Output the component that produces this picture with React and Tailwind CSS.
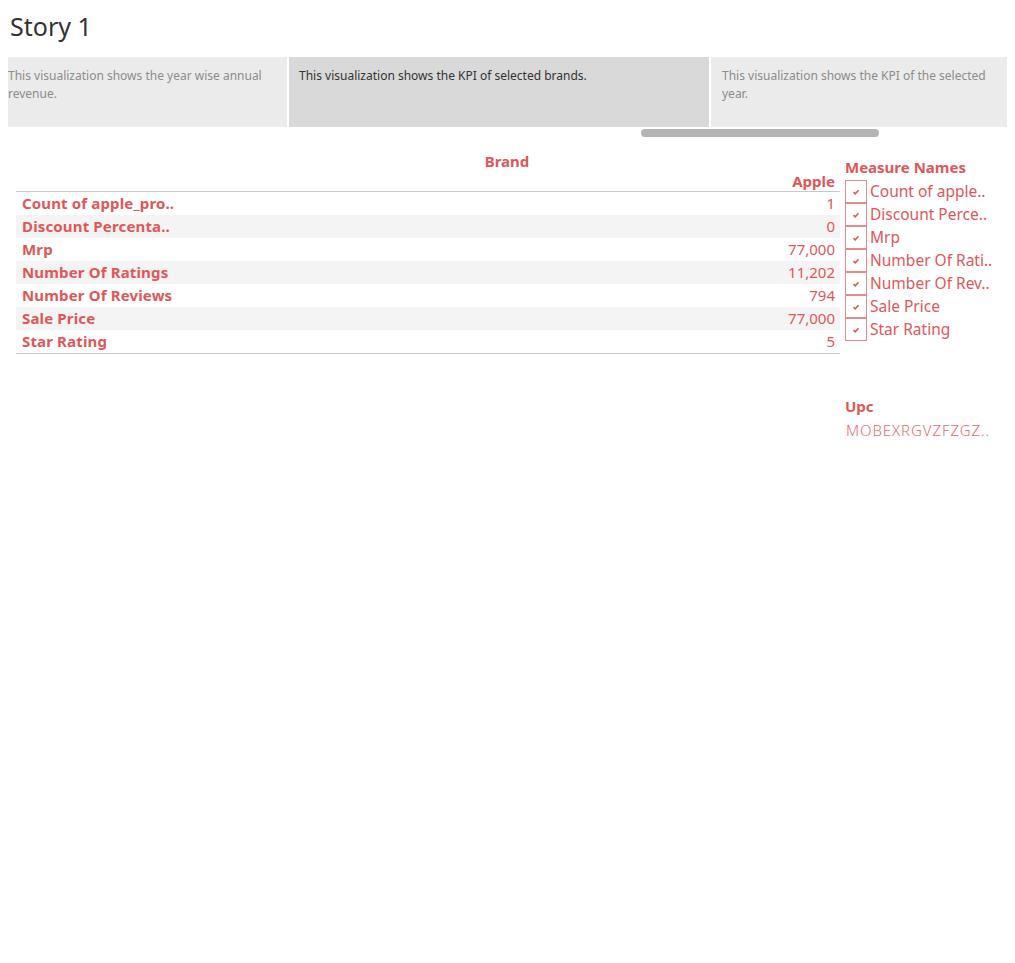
import React from 'react';

const rows = [
  ['Count of apple_pro..', '1'],
  ['Discount Percenta..', '0'],
  ['Mrp', '77,000'],
  ['Number Of Ratings', '11,202'],
  ['Number Of Reviews', '794'],
  ['Sale Price', '77,000'],
  ['Star Rating', '5'],
];

const legend = [
  'Count of apple..',
  'Discount Perce..',
  'Mrp',
  'Number Of Rati..',
  'Number Of Rev..',
  'Sale Price',
  'Star Rating',
];

const points = [
  { text: 'This visualization shows the year wise annual revenue.', w: 'w-[279px]', active: false, pad: 'pl-0' },
  { text: 'This visualization shows the KPI of selected brands.', w: 'w-[420px]', active: true, pad: 'pl-[10px]' },
  { text: 'This visualization shows the KPI of the selected year.', w: 'w-[296px]', active: false, pad: 'pl-[11px]' },
];

function Check() {
  return (
    <svg width="8" height="8" viewBox="0 0 8 8">
      <path d="M1.5 4.2 L3.2 5.8 L6.5 2.2" fill="none" stroke="#e15759" strokeWidth="1.6" />
    </svg>
  );
}

export default function App() {
  return (
    <div className="w-[1015px] h-[963px] bg-white text-[#333]" style={{ fontFamily: '"Noto Sans", "Open Sans", sans-serif' }}>
      <div className="pt-[10px] pl-[10px] h-[57px] text-[25px] leading-[32px] text-[#333]">Story 1</div>

      <div className="flex gap-[2px] pl-[8px] h-[70px]">
        {points.map((p, i) => (
          <div
            key={i}
            className={`${p.w} ${p.pad} pr-[14px] pt-[10px] text-[12px] leading-[18px] ${p.active ? 'bg-[#d9d9d9] text-[#333]' : 'bg-[#ebebeb] text-[#8c8c8c]'}`}
          >
            {p.text}
          </div>
        ))}
      </div>
      <div className="h-[12px] flex items-center">
        <div className="ml-[641px] w-[238px] h-[8px] rounded-full bg-[#b4b4b4]" />
      </div>

      <div className="flex pt-[12px] text-[#e15759]">
        <div className="ml-[16px] w-[824px]">
          <div className="text-center font-bold text-[15px] leading-[20px] pl-[158px]">Brand</div>
          <div className="text-right font-bold text-[15px] leading-[20px] pr-[5px] h-[20px]">Apple</div>
          <div className="border-t border-b border-[#c8c8c8]">
            {rows.map(([k, v], i) => (
              <div key={k} className={`flex justify-between h-[23px] items-center pl-[6px] pr-[5px] text-[15px] ${i % 2 ? 'bg-[#f4f4f4]' : 'bg-white'}`}>
                <span className="font-bold tracking-[0.15px]">{k}</span>
                <span>{v}</span>
              </div>
            ))}
          </div>
        </div>

        <div className="ml-[5px] pt-[6px]">
          <div className="font-bold text-[15px] leading-[20px]">Measure Names</div>
          <div className="flex flex-col mt-[3px]">
            {legend.map((l) => (
              <div key={l} className="flex items-center h-[23px]">
                <div className="w-[22px] h-[23px] border-x border-b border-[#e8898b] first:border-t flex items-center justify-center">
                  <Check />
                </div>
                <span className="ml-[3px] text-[15.5px] whitespace-nowrap">{l}</span>
              </div>
            ))}
          </div>

          <div className="mt-[55px] font-bold text-[15px] leading-[20px]">Upc</div>
          <div className="mt-[4px] ml-[1px] text-[15px] leading-[20px] text-[#e66b6e] font-light tracking-[0.9px]">MOBEXRGVZFZGZ..</div>
        </div>
      </div>
    </div>
  );
}
